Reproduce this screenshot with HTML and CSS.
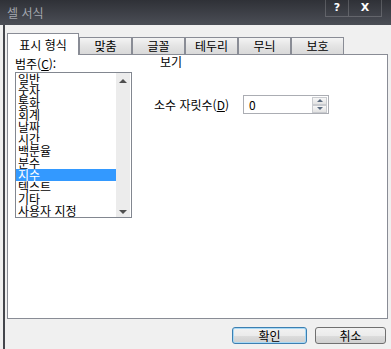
FILE: index.html
```html
<!DOCTYPE html>
<html lang="ko">
<head>
    <meta charset="UTF-8">
    <title>셀 서식</title>
    <link rel="stylesheet" href="styles.css">
</head>
<body>
    <div class="titlebar">
        <span class="title">셀 서식</span>
        <div class="caption-buttons">
            <span class="caption help">?</span>
            <span class="caption close">X</span>
        </div>
    </div>
    <div class="client">
        <div class="tabs">
            <div class="tab active">표시 형식</div>
            <div class="tab">맞춤</div>
            <div class="tab">글꼴</div>
            <div class="tab">테두리</div>
            <div class="tab">무늬</div>
            <div class="tab">보호</div>
        </div>
        <div class="panel">
            <div class="category">
                <div class="field-label">범주(<u>C</u>):</div>
                <div class="listbox">
                    <ul class="items">
                        <li>일반</li>
                        <li>숫자</li>
                        <li>통화</li>
                        <li>회계</li>
                        <li>날짜</li>
                        <li>시간</li>
                        <li>백분율</li>
                        <li>분수</li>
                        <li class="selected">지수</li>
                        <li>텍스트</li>
                        <li>기타</li>
                        <li>사용자 지정</li>
                    </ul>
                    <div class="scrollbar">
                        <span class="arrow up"></span>
                        <span class="arrow down"></span>
                    </div>
                </div>
            </div>
            <div class="options">
                <div class="preview-label">보기</div>
                <div class="decimal-row">
                    <span class="decimal-label">소수 자릿수(<u>D</u>)</span>
                    <div class="spinbox">
                        <span class="spin-value">0</span>
                        <div class="spin-buttons">
                            <span class="spin-btn"><span class="arrow small up"></span></span>
                            <span class="spin-btn"><span class="arrow small down"></span></span>
                        </div>
                    </div>
                </div>
            </div>
        </div>
        <div class="buttons">
            <button class="btn default">확인</button>
            <button class="btn">취소</button>
        </div>
    </div>
</body>
</html>
```

FILE: styles.css
```css
html, body {
    margin: 0;
    width: 391px;
    height: 349px;
    overflow: hidden;
}
body {
    background: #f0f0f0;
    font-family: "Noto Sans CJK KR", "Noto Sans", sans-serif;
    font-size: 12px;
    color: #000;
}
.titlebar {
    height: 25px;
    background: linear-gradient(to bottom, #2f3137, #4b4e56);
    display: flex;
    justify-content: space-between;
    align-items: flex-start;
}
.title {
    color: #a3a7af;
    font-size: 12px;
    line-height: 12px;
    padding: 7px 0 0 7px;
}
.caption-buttons {
    display: flex;
    margin-right: 9px;
}
.caption {
    height: 17px;
    box-sizing: border-box;
    border: 1px solid rgba(255, 255, 255, 0.18);
    border-top: none;
    color: #fff;
    font-family: "DejaVu Sans", sans-serif;
    font-weight: bold;
    font-size: 11px;
    line-height: 15px;
    text-align: center;
}
.caption.help {
    width: 24px;
}
.caption.close {
    width: 33px;
    border-left: none;
}
.client {
    margin-left: 3px;
    border-left: 2px solid #44464c;
    padding: 8px 3px 0 2px;
    height: 324px;
}
.tabs {
    display: flex;
    align-items: flex-end;
    height: 21px;
}
.tab {
    box-sizing: border-box;
    width: 53px;
    height: 17px;
    border: 1px solid #898c95;
    border-bottom: none;
    background: linear-gradient(to bottom, #f4f4f4, #e4e4e4 50%, #d9d9d9);
    text-align: center;
    line-height: 14px;
    padding-top: 1px;
    margin-left: -1px;
}
.tab + .tab {
    margin-left: 0;
}
.tab.active {
    width: 72px;
    height: 22px;
    margin-bottom: -1px;
    margin-left: 0;
    margin-right: 0;
    background: #fff;
    padding-top: 4px;
    position: relative;
    z-index: 1;
}
.panel {
    box-sizing: border-box;
    height: 265px;
    border: 1px solid #898c95;
    background: #fff;
    display: flex;
    padding: 0 7px;
}
.field-label {
    line-height: 14px;
    padding-top: 2px;
    margin-bottom: 1px;
}
.listbox {
    box-sizing: border-box;
    width: 117px;
    height: 146px;
    border: 1px solid #828790;
    display: flex;
}
.items {
    list-style: none;
    margin: 0;
    padding: 0;
    flex: 1;
}
.items li {
    height: 12px;
    line-height: 12px;
    padding-left: 2px;
    white-space: nowrap;
}
.items li.selected {
    background: #3399ff;
    color: #fff;
}
.scrollbar {
    width: 14px;
    margin-right: 1px;
    background: #ececec;
    display: flex;
    flex-direction: column;
    justify-content: space-between;
    align-items: center;
    padding: 6px 0 3px;
    box-sizing: border-box;
}
.arrow {
    width: 0;
    height: 0;
    border-left: 4px solid transparent;
    border-right: 4px solid transparent;
}
.arrow.up {
    border-bottom: 4px solid #4f4f4f;
}
.arrow.down {
    border-top: 4px solid #4f4f4f;
}
.arrow.small {
    border-left-width: 3px;
    border-right-width: 3px;
}
.arrow.small.up {
    border-bottom: 3px solid #5a6b80;
}
.arrow.small.down {
    border-top: 3px solid #5a6b80;
}
.options {
    margin-left: 22px;
}
.preview-label {
    line-height: 14px;
    padding-left: 6px;
}
.decimal-row {
    display: flex;
    align-items: center;
    margin-top: 26px;
}
.decimal-label {
    width: 89px;
    line-height: 14px;
}
.spinbox {
    box-sizing: border-box;
    width: 86px;
    height: 19px;
    border: 1px solid #abadb3;
    display: flex;
    justify-content: space-between;
    align-items: center;
}
.spin-value {
    padding-left: 5px;
    line-height: 14px;
}
.spin-buttons {
    display: flex;
    flex-direction: column;
    margin-right: 1px;
}
.spin-btn {
    box-sizing: border-box;
    width: 15px;
    height: 8px;
    border: 1px solid #c9cbcf;
    background: linear-gradient(to bottom, #f7f7f7, #e2e2e2);
    display: flex;
    justify-content: center;
    align-items: center;
}
.buttons {
    display: flex;
    justify-content: flex-end;
    gap: 8px;
    padding: 8px 2px 0 0;
}
.btn {
    box-sizing: border-box;
    width: 71px;
    height: 17px;
    padding: 0;
    border: 1px solid #707070;
    border-radius: 3px;
    background: linear-gradient(to bottom, #f2f2f2, #ebebeb 50%, #dddddd 51%, #cfcfcf);
    font-family: inherit;
    font-size: 12px;
    line-height: 14px;
    color: #000;
}
.btn.default {
    width: 75px;
    border-color: #3c7fb1;
    box-shadow: inset 0 0 0 1px #a7d8f5;
}
```
